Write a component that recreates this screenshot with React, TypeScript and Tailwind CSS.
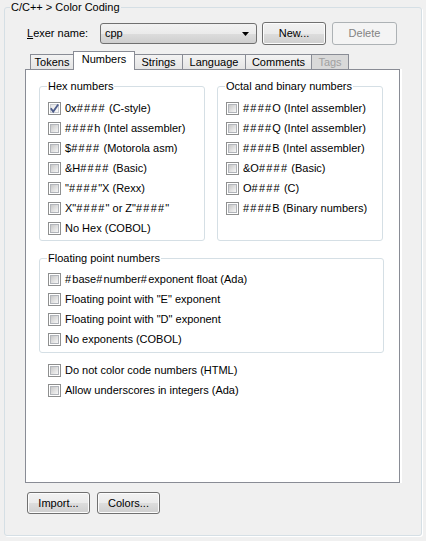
import React from "react";

const btnBg =
  "bg-[linear-gradient(#f2f2f2_0%,#ebebeb_50%,#dddddd_51%,#cfcfcf_100%)]";

function CheckBox({ checked }: { checked?: boolean }) {
  return (
    <div className="w-[13px] h-[13px] border border-[#8e8f8f] bg-white p-px shrink-0 relative">
      <div
        className={
          checked
            ? "w-full h-full border border-[#c9ccd1] bg-[linear-gradient(135deg,#e6e6e6,#fbfbfb)]"
            : "w-full h-full border border-[#b2b5ba] bg-[linear-gradient(135deg,#c8c8c8,#f6f6f6)]"
        }
      />
      {checked && (
        <svg className="absolute left-[-1px] top-[-1px]" width="13" height="13" viewBox="0 0 13 13">
          <path d="M2.8 6.2 L5.2 9.6 L10.2 2.4" fill="none" stroke="#4d5c8a" strokeWidth="1.8" />
        </svg>
      )}
    </div>
  );
}

function Label({ text }: { text: string }) {
  const parts = text.split(/(#)/);
  return (
    <span className="whitespace-pre">
      {parts.map((p, i) =>
        p === "#" ? (
          <span key={i} className="tracking-[1.2px]">
            #
          </span>
        ) : (
          <React.Fragment key={i}>{p}</React.Fragment>
        )
      )}
    </span>
  );
}

function Row({ label, checked }: { label: string; checked?: boolean }) {
  return (
    <div className="h-[20px] flex items-center gap-[4px]">
      <CheckBox checked={checked} />
      <Label text={label} />
    </div>
  );
}

function Group({
  title,
  className,
  pt,
  children,
}: {
  title: string;
  className: string;
  pt: string;
  children: React.ReactNode;
}) {
  return (
    <div className={`relative border border-[#d5dfe5] rounded-[3px] pl-[8px] ${pt} ${className}`}>
      <span className="absolute left-[7px] top-[-8px] leading-[14px] px-[1px] bg-white">{title}</span>
      {children}
    </div>
  );
}

function Tab({
  label,
  w,
  selected,
  disabled,
  first,
}: {
  label: string;
  w: string;
  selected?: boolean;
  disabled?: boolean;
  first?: boolean;
}) {
  const base = `${w} ${first ? "" : "-ml-px"} flex items-center justify-center border-t border-l border-r border-[#898c95]`;
  if (selected)
    return (
      <div className={`${base} h-[19px] -mb-px bg-white relative z-10 pb-[3px]`}>{label}</div>
    );
  if (disabled)
    return (
      <div className={`${base} h-[15px] bg-[#d9d9d9] text-[#a0a0a0]`}>{label}</div>
    );
  return (
    <div className={`${base} h-[15px] bg-[linear-gradient(#f3f3f3,#e4e4e4)]`}>{label}</div>
  );
}

export default function App() {
  return (
    <div className="w-[426px] h-[541px] bg-[#f0f0f0] pt-[7px] px-[4px] text-[11px] text-black font-['Liberation_Sans',Arial,sans-serif] leading-[13px] overflow-hidden">
      <div className="relative w-[418px] h-[529px] border border-[#d5dfe5] rounded-[3px] shadow-[1px_1px_0_#ffffff]">
        <span className="absolute left-[5px] top-[-8px] leading-[14px] px-[1px] bg-[#f0f0f0]">
          C/C++ &gt; Color Coding
        </span>

        {/* Lexer row */}
        <div className="mt-[14px] ml-[22px] h-[23px] flex items-center">
          <div className="w-[73px]">
            <span className="underline">L</span>exer name:
          </div>
          <div className={`w-[157px] h-[21px] border border-[#707070] rounded-[3px] ${btnBg} flex items-center pl-[4px] pr-[7px]`}>
            <span className="flex-1">cpp</span>
            <svg width="7" height="4" viewBox="0 0 7 4">
              <path d="M0 0 H7 L3.5 4 Z" fill="#000" />
            </svg>
          </div>
          <div className={`ml-[5px] w-[64px] h-[23px] border border-[#707070] rounded-[3px] ${btnBg} shadow-[inset_0_0_0_1px_#fcfcfc] flex items-center justify-center`}>
            New...
          </div>
          <div className="ml-[6px] w-[65px] h-[23px] border border-[#adb2b5] rounded-[3px] bg-[#f4f4f4] text-[#838383] flex items-center justify-center">
            Delete
          </div>
        </div>

        {/* Tabs */}
        <div className="mt-[6px] ml-[20px] pl-[5px] h-[18px] flex items-end">
          <Tab label="Tokens" w="w-[44px]" first />
          <Tab label="Numbers" w="w-[62px]" selected />
          <Tab label="Strings" w="w-[49px]" />
          <Tab label="Language" w="w-[64px]" />
          <Tab label="Comments" w="w-[67px]" />
          <Tab label="Tags" w="w-[38px]" disabled />
        </div>

        {/* Panel */}
        <div className="ml-[20px] w-[375px] h-[414px] border border-[#898c95] bg-white shadow-[2px_0_0_#ffffff] pl-[13px] pt-[16px]">
          <div className="flex gap-[12px]">
            <Group title="Hex numbers" className="w-[166px] h-[155px]" pt="pt-[11px]">
              <Row label="0x#### (C-style)" checked />
              <Row label="####h (Intel assembler)" />
              <Row label="$#### (Motorola asm)" />
              <Row label="&H#### (Basic)" />
              <Row label={'"####"X (Rexx)'} />
              <Row label={'X"####" or Z"####"'} />
              <Row label="No Hex (COBOL)" />
            </Group>
            <Group title="Octal and binary numbers" className="w-[166px] h-[155px]" pt="pt-[11px]">
              <Row label="####O (Intel assembler)" />
              <Row label="####Q (Intel assembler)" />
              <Row label="####B (Intel assembler)" />
              <Row label="&O#### (Basic)" />
              <Row label="O#### (C)" />
              <Row label="####B (Binary numbers)" />
            </Group>
          </div>
          <Group title="Floating point numbers" className="mt-[17px] w-[345px] h-[95px]" pt="pt-[10px]">
            <Row label="#base#number#exponent float (Ada)" />
            <Row label={'Floating point with "E" exponent'} />
            <Row label={'Floating point with "D" exponent'} />
            <Row label="No exponents (COBOL)" />
          </Group>
          <div className="mt-[7px] pl-[9px]">
            <Row label="Do not color code numbers (HTML)" />
            <Row label="Allow underscores in integers (Ada)" />
          </div>
        </div>

        {/* Bottom buttons */}
        <div className="mt-[9px] ml-[22px] flex gap-[7px]">
          <div className={`w-[63px] h-[22px] border border-[#707070] rounded-[3px] ${btnBg} shadow-[inset_0_0_0_1px_#fcfcfc] flex items-center justify-center`}>
            Import...
          </div>
          <div className={`w-[63px] h-[22px] border border-[#707070] rounded-[3px] ${btnBg} shadow-[inset_0_0_0_1px_#fcfcfc] flex items-center justify-center`}>
            Colors...
          </div>
        </div>
      </div>
    </div>
  );
}
